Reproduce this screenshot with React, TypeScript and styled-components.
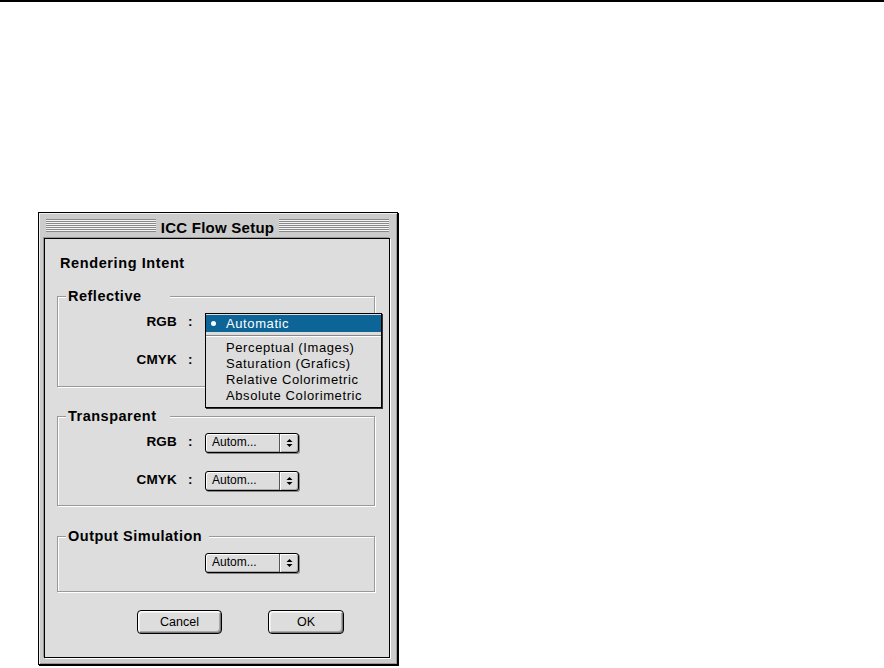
import React from "react";
import styled, { createGlobalStyle } from "styled-components";

const GlobalStyle = createGlobalStyle`
  html, body { margin: 0; padding: 0; background: #fff; }
  body { font-family: "Liberation Sans", Arial, sans-serif; color: #000; }
  * { box-sizing: border-box; }
`;

const Page = styled.div`
  width: 884px;
  height: 668px;
  overflow: hidden;
  background: #fff;
`;

const TopRule = styled.div`
  height: 2px;
  background: #000;
`;

const Window = styled.div`
  margin: 210px 0 0 38px;
  width: 360px;
  background: #cccccc;
  border: 1px solid #000;
  box-shadow: 1px 1px 0 #000, inset 1px 1px 0 #eeeeee, inset -1px -1px 0 #999999;
  padding: 0 7px 6px 5px;
`;

const TitleBar = styled.div`
  height: 25px;
  display: flex;
  align-items: center;
  gap: 5px;
  padding: 0 1px 0 2px;
`;

const Stripes = styled.div`
  flex: 1;
  height: 13px;
  background: repeating-linear-gradient(
    to bottom,
    #888888 0px,
    #888888 1px,
    #f4f4f4 1px,
    #f4f4f4 2px
  );
`;

const Title = styled.div`
  height: 25px;
  padding-top: 4px;
  line-height: 21px;
  font-size: 15px;
  font-weight: bold;
  letter-spacing: 0.25px;
  white-space: nowrap;
`;

const Content = styled.div`
  background: #dddddd;
  border: 1px solid #000;
  box-shadow: -1px -1px 0 #999999, 1px 1px 0 #ffffff;
  padding: 15px 14px 23px 12px;
`;

const Heading = styled.div`
  margin: 0 0 24px 3px;
  font-size: 14.5px;
  font-weight: bold;
  letter-spacing: 0.6px;
  line-height: 18px;
`;

const GroupBox = styled.div<{ $mt: number; $pb: number }>`
  position: relative;
  margin-top: ${(p) => p.$mt}px;
  border: 1px solid #999999;
  box-shadow: inset 1px 1px 0 #ffffff, 1px 1px 0 #ffffff;
  padding: 16px 0 ${(p) => p.$pb}px;
  display: grid;
  row-gap: 18px;
`;

const Legend = styled.div`
  position: absolute;
  top: -9px;
  left: 8px;
  min-width: 104px;
  padding: 0 7px 0 2px;
  background: #dddddd;
  font-size: 14.5px;
  font-weight: bold;
  letter-spacing: 0.5px;
  line-height: 17px;
  white-space: nowrap;
`;

const Row = styled.div`
  display: grid;
  grid-template-columns: 119px 28px auto;
  align-items: center;
  height: 20px;
`;

const Label = styled.div`
  text-align: right;
  font-size: 13.5px;
  font-weight: bold;
  letter-spacing: 0.2px;
  line-height: 18px;
  padding-bottom: 2px;
`;

const Colon = styled(Label)`
  text-align: left;
  padding-left: 11px;
`;

const PopupAnchor = styled.div`
  position: relative;
  width: 94px;
  height: 20px;
`;

const Popup = styled.div`
  display: flex;
  width: 94px;
  height: 20px;
  border: 1px solid #000;
  border-radius: 3px;
  background: #dddddd;
  box-shadow: 1px 1px 0 #888888, inset 1px 1px 0 #ffffff, inset -1px -1px 0 #aaaaaa;
`;

const PopupText = styled.div<{ $covered?: boolean }>`
  flex: 1;
  padding-left: 6px;
  font-size: 12px;
  line-height: 17px;
  white-space: nowrap;
  visibility: ${(p) => (p.$covered ? "hidden" : "visible")};
`;

const PopupArrows = styled.div`
  width: 19px;
  border-left: 1px solid #555555;
  display: flex;
  align-items: center;
  justify-content: center;
  box-shadow: inset 1px 0 0 #ffffff;
`;

const Menu = styled.div`
  position: absolute;
  top: 0;
  left: 0;
  z-index: 2;
  width: 177px;
  background: #dddddd;
  border: 1px solid #000;
  box-shadow: 1px 1px 0 #333333;
  padding: 1px 0 3px;
`;

const MenuItem = styled.div<{ $selected?: boolean }>`
  display: grid;
  grid-template-columns: 20px 1fr;
  align-items: center;
  height: ${(p) => (p.$selected ? 17 : 16)}px;
  line-height: ${(p) => (p.$selected ? 17 : 16)}px;
  background: ${(p) => (p.$selected ? "#0c6497" : "transparent")};
  color: ${(p) => (p.$selected ? "#ffffff" : "#000000")};
  font-size: 13px;
  letter-spacing: 0.6px;
  white-space: nowrap;
`;

const Mark = styled.div`
  display: flex;
  align-items: center;
  padding-left: 5px;
`;

const Dot = styled.span`
  width: 5px;
  height: 5px;
  border-radius: 50%;
  background: #ffffff;
`;

const Separator = styled.div`
  height: 8px;
  background: linear-gradient(
    to bottom,
    transparent 0px,
    transparent 3px,
    #888888 3px,
    #888888 4px,
    #ffffff 4px,
    #ffffff 5px,
    transparent 5px
  );
`;

const ButtonRow = styled.div`
  display: flex;
  gap: 46px;
  padding-left: 80px;
  margin-top: 18px;
`;

const PushButton = styled.button<{ $w: number }>`
  width: ${(p) => p.$w}px;
  height: 24px;
  padding: 0;
  border: 1px solid #000;
  border-radius: 4px;
  background: #dddddd;
  color: #000;
  font-family: inherit;
  font-size: 12.5px;
  line-height: 22px;
  box-shadow: inset 1px 1px 0 #ffffff, inset 2px 2px 0 #eeeeee,
    inset -1px -1px 0 #777777, inset -2px -2px 0 #aaaaaa;
`;

const Arrows = () => (
  <svg width="7" height="10" viewBox="0 0 7 10">
    <polygon points="0.5,4 3.5,1 6.5,4" fill="#000" />
    <polygon points="0.5,6 3.5,9 6.5,6" fill="#000" />
  </svg>
);

const PopupButton: React.FC<{ value: string; covered?: boolean }> = ({
  value,
  covered,
}) => (
  <Popup>
    <PopupText $covered={covered}>{value}</PopupText>
    <PopupArrows>
      <Arrows />
    </PopupArrows>
  </Popup>
);

const menuItems = [
  "Perceptual (Images)",
  "Saturation (Grafics)",
  "Relative Colorimetric",
  "Absolute Colorimetric",
];

const OpenMenu = () => (
  <Menu>
    <MenuItem $selected>
      <Mark>
        <Dot />
      </Mark>
      <span>Automatic</span>
    </MenuItem>
    <Separator />
    {menuItems.map((m) => (
      <MenuItem key={m}>
        <span />
        <span>{m}</span>
      </MenuItem>
    ))}
  </Menu>
);

export default function App() {
  return (
    <Page>
      <GlobalStyle />
      <TopRule />
      <Window>
        <TitleBar>
          <Stripes />
          <Title>ICC Flow Setup</Title>
          <Stripes />
        </TitleBar>
        <Content>
          <Heading>Rendering Intent</Heading>

          <GroupBox $mt={0} $pb={15}>
            <Legend>Reflective</Legend>
            <Row>
              <Label>RGB</Label>
              <Colon>:</Colon>
              <PopupAnchor>
                <PopupButton value="Autom..." covered />
                <OpenMenu />
              </PopupAnchor>
            </Row>
            <Row>
              <Label>CMYK</Label>
              <Colon>:</Colon>
              <PopupAnchor>
                <PopupButton value="Autom..." covered />
              </PopupAnchor>
            </Row>
          </GroupBox>

          <GroupBox $mt={29} $pb={14}>
            <Legend>Transparent</Legend>
            <Row>
              <Label>RGB</Label>
              <Colon>:</Colon>
              <PopupAnchor>
                <PopupButton value="Autom..." />
              </PopupAnchor>
            </Row>
            <Row>
              <Label>CMYK</Label>
              <Colon>:</Colon>
              <PopupAnchor>
                <PopupButton value="Autom..." />
              </PopupAnchor>
            </Row>
          </GroupBox>

          <GroupBox $mt={30} $pb={18}>
            <Legend>Output Simulation</Legend>
            <Row>
              <span />
              <span />
              <PopupAnchor>
                <PopupButton value="Autom..." />
              </PopupAnchor>
            </Row>
          </GroupBox>

          <ButtonRow>
            <PushButton $w={85}>Cancel</PushButton>
            <PushButton $w={76}>OK</PushButton>
          </ButtonRow>
        </Content>
      </Window>
    </Page>
  );
}
